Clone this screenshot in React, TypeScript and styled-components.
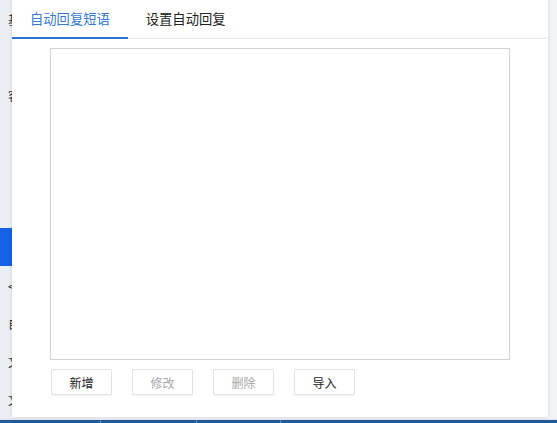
import React, { useState } from "react";
import styled, { createGlobalStyle } from "styled-components";

const GlobalStyle = createGlobalStyle`
    html, body {
        margin: 0;
        padding: 0;
        background: #f4f5f8;
        font-family: "Noto Sans CJK SC", "Noto Sans", sans-serif;
        overflow: hidden;
    }
`;

const Page = styled.div`
    position: relative;
    width: 557px;
    height: 423px;
    display: grid;
    grid-template-rows: 1fr 4px;
    overflow: hidden;
`;

const Body = styled.div`
    display: flex;
    min-height: 0;
`;

const Sidebar = styled.div`
    width: 100px;
    background: #eceef5;
    display: flex;
    flex-direction: column;
`;

const MenuItem = styled.div<{ $active?: boolean }>`
    height: 38px;
    flex-shrink: 0;
    display: flex;
    align-items: center;
    padding-left: 8px;
    font-size: 12px;
    color: #333;
    background: ${(p) => (p.$active ? "#1463e6" : "transparent")};
`;

const Main = styled.div`
    flex: 1;
    background: #f2f3f5;
`;

const BottomBar = styled.div`
    background: #1f5b98;
    border-top: 1px solid #dfe3ea;
    display: flex;
`;

const BarCell = styled.div<{ $w: number }>`
    width: ${(p) => p.$w}px;
    border-right: 1px solid #5c86b4;
`;

const Modal = styled.div`
    position: absolute;
    left: 12px;
    top: 0;
    width: 536px;
    height: 417px;
    background: #fff;
    box-shadow: 0 0 4px rgba(0, 0, 0, 0.12);
    display: flex;
    flex-direction: column;
`;

const TabBar = styled.div`
    display: flex;
    height: 38px;
    border-bottom: 1px solid #e6e8ec;
`;

const Tab = styled.div<{ $active?: boolean }>`
    padding: 0 18px;
    display: flex;
    align-items: center;
    font-size: 13.3px;
    cursor: pointer;
    color: ${(p) => (p.$active ? "#3479d6" : "#222")};
    border-bottom: 2px solid ${(p) => (p.$active ? "#2a73cf" : "transparent")};
    margin-bottom: -1px;
`;

const Content = styled.div`
    padding: 9px 0 0 38px;
    display: flex;
    flex-direction: column;
    gap: 9px;
`;

const ListBox = styled.div`
    width: 458px;
    height: 310px;
    border: 1px solid #cfd1d4;
    background: #fff;
`;

const ButtonRow = styled.div`
    display: flex;
    gap: 20px;
    padding-left: 1px;
`;

const Button = styled.button<{ $disabled?: boolean }>`
    width: 61px;
    height: 26px;
    padding: 0;
    border: 1px solid #e1e3e6;
    border-radius: 1px;
    background: #fff;
    box-shadow: 0 1px 1px rgba(0, 0, 0, 0.04);
    font-family: "Noto Sans CJK SC", "Noto Sans", sans-serif;
    font-size: 12px;
    color: ${(p) => (p.$disabled ? "#a8a8a8" : "#222")};
    cursor: ${(p) => (p.$disabled ? "default" : "pointer")};
`;

// only the first glyph of each menu label peeks out from under the dialog
const menu = ["基", "", "客", "", "", "", "", "<", "自", "文", "文"];

const App: React.FC = () => {
    const [tab, setTab] = useState(0);

    return (
        <Page>
            <GlobalStyle />
            <Body>
                <Sidebar>
                    {menu.map((m, i) => (
                        <MenuItem key={i} $active={i === 6}>{m}</MenuItem>
                    ))}
                </Sidebar>
                <Main />
            </Body>
            <BottomBar>
                <BarCell $w={100} />
                <BarCell $w={95} />
                <BarCell $w={83} />
            </BottomBar>
            <Modal>
                <TabBar>
                    <Tab $active={tab === 0} onClick={() => setTab(0)}>自动回复短语</Tab>
                    <Tab $active={tab === 1} onClick={() => setTab(1)}>设置自动回复</Tab>
                </TabBar>
                <Content>
                    <ListBox />
                    <ButtonRow>
                        <Button>新增</Button>
                        <Button $disabled>修改</Button>
                        <Button $disabled>删除</Button>
                        <Button>导入</Button>
                    </ButtonRow>
                </Content>
            </Modal>
        </Page>
    );
};

export default App;
